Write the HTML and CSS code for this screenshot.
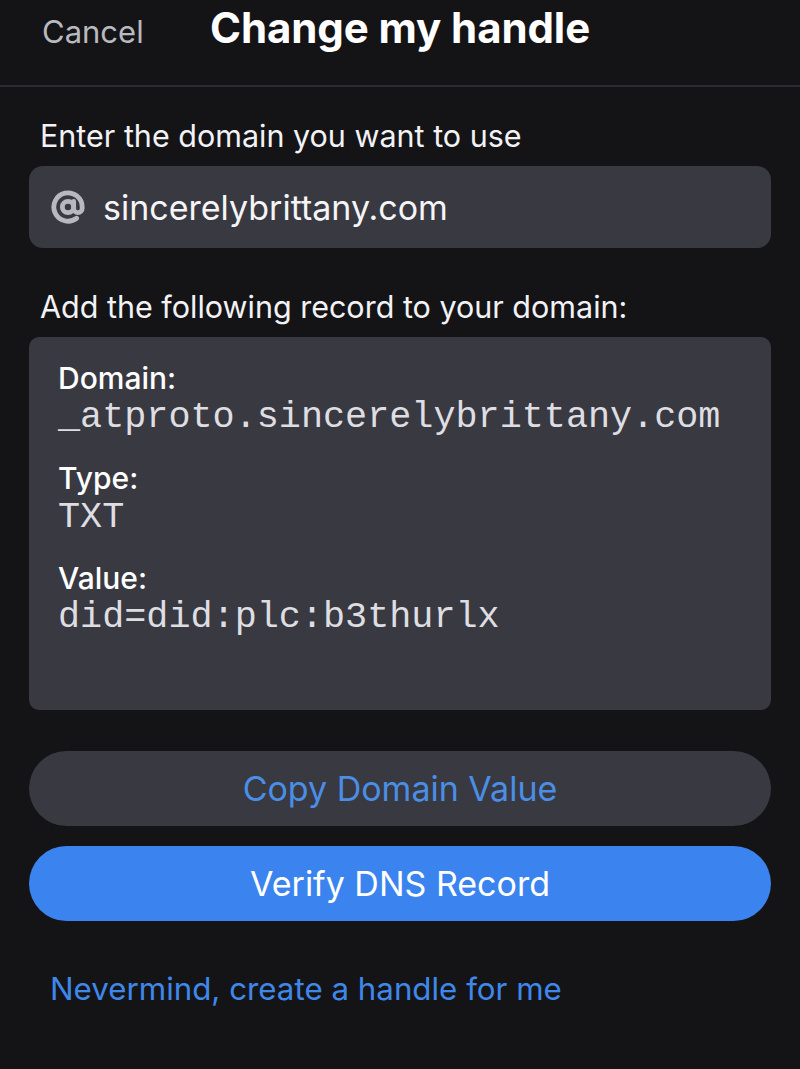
FILE: index.html
```html
<!DOCTYPE html>
<html>
<head>
<meta charset="utf-8">
<title>Change my handle</title>
<link rel="stylesheet" href="styles.css">
</head>
<body>
<div class="header">
  <span class="cancel">Cancel</span>
  <span class="title">Change my handle</span>
</div>

<div class="content">
  <p class="label">Enter the domain you want to use</p>
  <div class="input">
    <svg class="at" viewBox="0 0 24 24" width="34" height="34">
      <circle cx="12" cy="12" r="4"/>
      <path d="M16 8v5a3 3 0 0 0 6 0v-1a10 10 0 1 0-3.92 7.94"/>
    </svg>
    <span>sincerelybrittany.com</span>
  </div>

  <p class="label second">Add the following record to your domain:</p>
  <div class="record">
    <div class="field">Domain:</div>
    <div class="mono">_atproto.sincerelybrittany.com</div>
    <div class="field">Type:</div>
    <div class="mono dim">TXT</div>
    <div class="field">Value:</div>
    <div class="mono">did=did:plc:b3thurlx</div>
  </div>

  <div class="btn secondary">Copy Domain Value</div>
  <div class="btn primary">Verify DNS Record</div>

  <div class="link">Nevermind, create a handle for me</div>
</div>
</body>
</html>
```

FILE: styles.css
```css
body {
	margin		: 0;
	background-color: #141417;
	color		: #ffffff;
	font-family	: Inter, "Liberation Sans", sans-serif;
}
.header {
	display		: flex;
	align-items	: baseline;
	height		: 87px;
	padding-left	: 42px;
	border-bottom	: 2px solid #2a2a31;
	box-sizing	: border-box;
	padding-top	: 2px;
}
.cancel {
	font-size	: 31px;
	color		: #b9b9c0;
	width		: 168px;
}
.title {
	font-size	: 42px;
	font-weight	: 700;
	letter-spacing	: -0.1px;
}
.content {
	padding		: 0 29px;
}
.label {
	margin		: 30px 0 12px 11px;
	font-size	: 30.5px;
	color		: #f2f2f5;
}
.label.second {
	margin-top	: 40px;
}
.input {
	display		: flex;
	align-items	: center;
	height		: 82px;
	background-color: #393941;
	border-radius	: 14px;
	padding-left	: 22px;
	font-size	: 34px;
	color		: #f5f5f7;
}
.at {
	fill		: none;
	stroke		: #b8b8c0;
	stroke-width	: 3.4;
	stroke-linecap	: round;
	margin-right	: 18px;
}
.record {
	background-color: #393941;
	border-radius	: 10px;
	height		: 373px;
	box-sizing	: border-box;
	padding		: 22px 29px;
}
.field {
	font-size	: 30px;
	font-weight	: 500;
	margin-top	: 22px;
	line-height	: 38px;
}
.field:first-child {
	margin-top	: 0;
}
.mono {
	font-family	: "Liberation Mono", monospace;
	font-size	: 36.8px;
	color		: #dedee2;
	line-height	: 40px;
}
.btn {
	height		: 75px;
	border-radius	: 38px;
	display		: flex;
	align-items	: center;
	justify-content	: center;
	font-size	: 34px;
}
.btn.secondary {
	margin-top	: 41px;
	background-color: #393941;
	color		: #4a8ee6;
}
.btn.primary {
	margin-top	: 20px;
	background-color: #3b84f0;
	color		: #ffffff;
}
.link {
	margin		: 49px 0 0 21px;
	font-size	: 31.3px;
	color		: #3f88ea;
}
```
